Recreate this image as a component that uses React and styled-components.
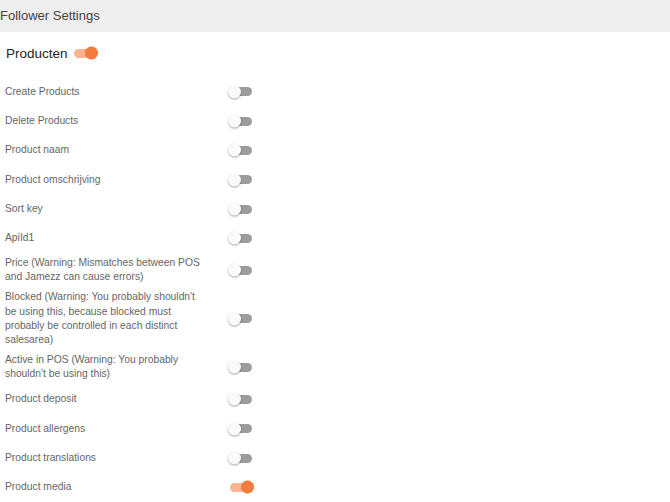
import React from "react";
import styled, { createGlobalStyle } from "styled-components";

const GlobalStyle = createGlobalStyle`
  html, body { margin: 0; padding: 0; background: #ffffff; }
  body { font-family: "Liberation Sans", Arial, sans-serif; }
`;

const Page = styled.div`
  width: 670px;
  min-height: 502px;
  background: #ffffff;
`;

const Header = styled.div`
  height: 32px;
  line-height: 32px;
  background: #eeeeee;
  color: #444444;
  font-size: 13px;
  padding-left: 0;
`;

const SectionTitle = styled.div`
  display: flex;
  align-items: center;
  gap: 6px;
  height: 18px;
  margin: 12px 0 15px 6px;
  font-size: 13.5px;
  color: #222222;
`;

const List = styled.div`
  display: flex;
  flex-direction: column;
`;

const Row = styled.div`
  display: grid;
  grid-template-columns: 230px auto;
  align-items: center;
  min-height: 23.35px;
  padding: 3px 0;
`;

const Label = styled.div`
  padding: 0 28px 0 5px;
  font-size: 10.3px;
  line-height: 14.2px;
  color: #666666;
`;

const Track = styled.span`
  position: relative;
  display: inline-block;
  width: 22px;
  height: 9px;
  border-radius: 5px;
  background: ${(p) => (p.$on ? "#f9b48e" : "#9c9c9c")};
`;

const Thumb = styled.span`
  position: absolute;
  top: 50%;
  left: ${(p) => (p.$on ? "11px" : "-2px")};
  width: 13px;
  height: 13px;
  border-radius: 50%;
  transform: translateY(-50%);
  background: ${(p) => (p.$on ? "#f47b3b" : "#fafafa")};
  box-shadow: ${(p) =>
    p.$on ? "0 0 1px rgba(0,0,0,0.15)" : "0 1px 2px rgba(0,0,0,0.35)"};
`;

const Switch = ({ on }) => (
  <Track $on={on}>
    <Thumb $on={on} />
  </Track>
);

const items = [
  ["Create Products", false],
  ["Delete Products", false],
  ["Product naam", false],
  ["Product omschrijving", false],
  ["Sort key", false],
  ["ApiId1", false],
  ["Price (Warning: Mismatches between POS and Jamezz can cause errors)", false],
  [
    "Blocked (Warning: You probably shouldn't be using this, because blocked must probably be controlled in each distinct salesarea)",
    false,
  ],
  ["Active in POS (Warning: You probably shouldn't be using this)", false],
  ["Product deposit", false],
  ["Product allergens", false],
  ["Product translations", false],
  ["Product media", true],
];

export default function App() {
  return (
    <Page>
      <GlobalStyle />
      <Header>Follower Settings</Header>
      <SectionTitle>
        Producten
        <Switch on />
      </SectionTitle>
      <List>
        {items.map(([label, on]) => (
          <Row key={label}>
            <Label>{label}</Label>
            <Switch on={on} />
          </Row>
        ))}
      </List>
    </Page>
  );
}
